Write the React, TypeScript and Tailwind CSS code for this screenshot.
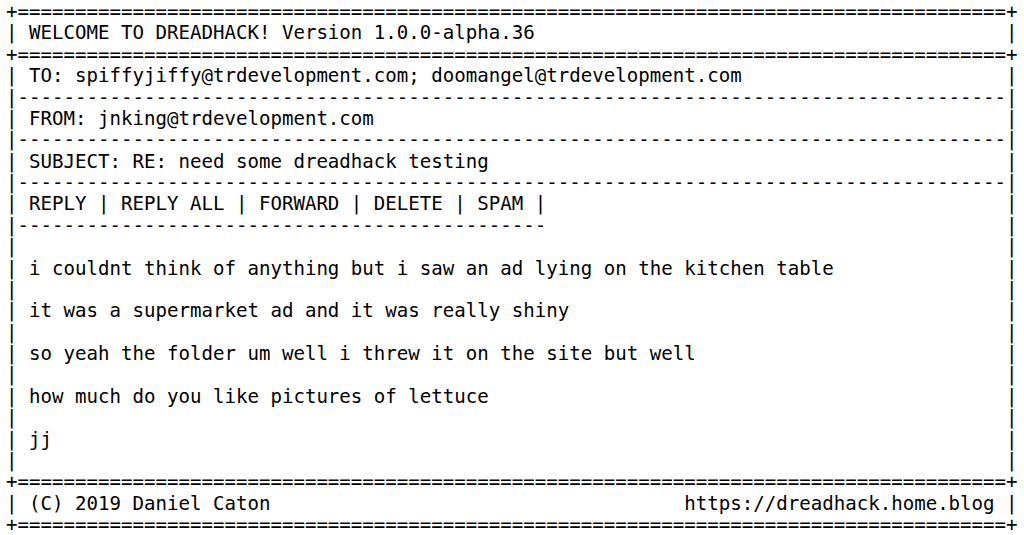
const WIDTH = 88;

const edge = (fill: string, corner: string) => corner + fill.repeat(WIDTH - 2) + corner;

const row = (text: string) => "| " + text.padEnd(WIDTH - 4, " ") + " |";

const split = (left: string, right: string) =>
  "| " + left + " ".repeat(WIDTH - 4 - left.length - right.length) + right + " |";

const blank = row("");
const rule = "|" + "-".repeat(WIDTH - 2) + "|";

const lines = [
  edge("=", "+"),
  row("WELCOME TO DREADHACK! Version 1.0.0-alpha.36"),
  edge("=", "+"),
  row("TO: spiffyjiffy@trdevelopment.com; doomangel@trdevelopment.com"),
  rule,
  row("FROM: jnking@trdevelopment.com"),
  rule,
  row("SUBJECT: RE: need some dreadhack testing"),
  rule,
  row("REPLY | REPLY ALL | FORWARD | DELETE | SPAM |"),
  ("|" + "-".repeat(46)).padEnd(WIDTH - 1, " ") + "|",
  blank,
  row("i couldnt think of anything but i saw an ad lying on the kitchen table"),
  blank,
  row("it was a supermarket ad and it was really shiny"),
  blank,
  row("so yeah the folder um well i threw it on the site but well"),
  blank,
  row("how much do you like pictures of lettuce"),
  blank,
  row("jj"),
  blank,
  edge("=", "+"),
  split("(C) 2019 Daniel Caton", "https://dreadhack.home.blog"),
  edge("=", "+"),
];

export default function App() {
  return (
    <div className="h-[535px] w-[1024px] overflow-hidden bg-white pt-[1px] pl-[6px] font-['DejaVu_Sans_Mono',monospace] text-[19.1px] leading-[21.375px] text-black">
      {lines.map((line, i) => (
        <div key={i} className="whitespace-pre">
          {line}
        </div>
      ))}
    </div>
  );
}
